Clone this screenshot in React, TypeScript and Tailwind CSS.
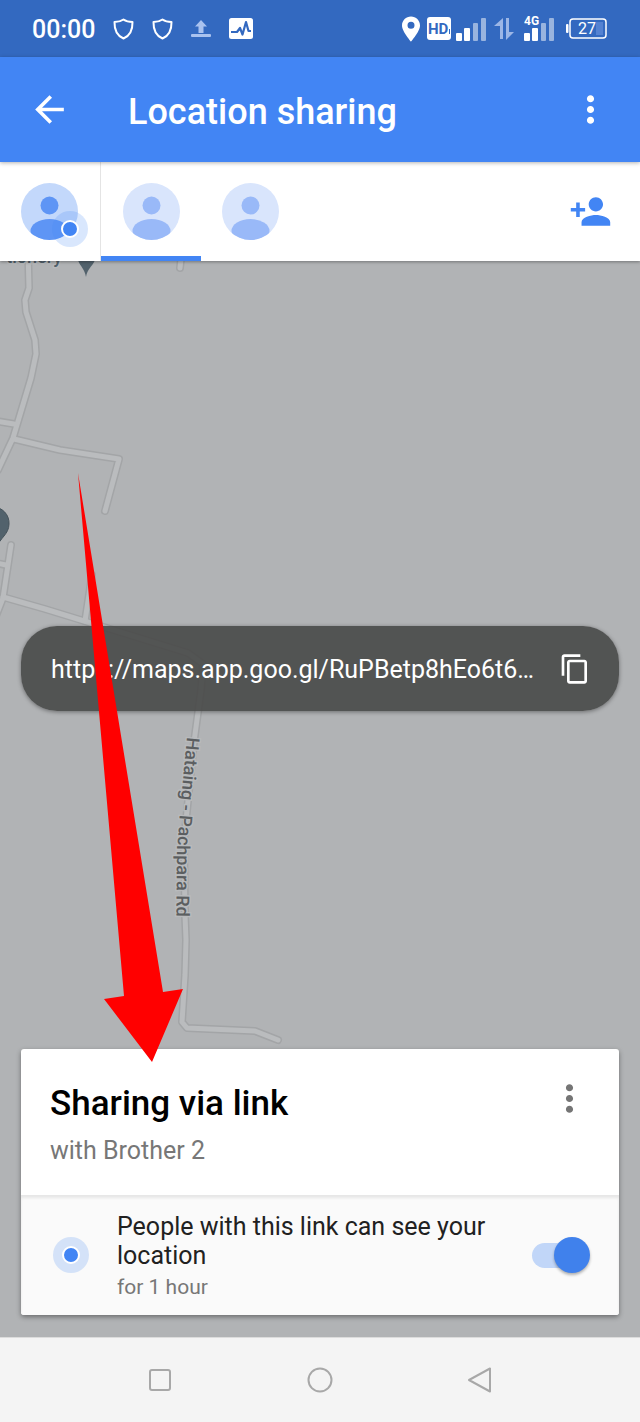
import React, {useState} from "react";
import {MdArrowBack, MdContentCopy, MdMoreVert, MdPersonAdd} from "react-icons/md";

const SHARE_LINK = "https://maps.app.goo.gl/RuPBetp8hEo6t6…";

const roads = [
    "M28 250 L29 288 L25 300 L26 312 L35 340 L36 354 L31 378 L13 438 L-2 470",
    "M-4 421 L14 424",
    "M14 439 L60 450 L119 459 L105 511",
    "M182 250 L180 268",
    "M11 545 L3 598 L-4 616",
    "M-4 563 L6 565",
    "M3 597 L45 609 L120 632 L188 653 L203 664 L201 690 L194 742 L184 840 L185 915 L186 940 L185 975 L182 1022 L187 1028 L255 1031 L278 1040",
    "M92 575 L85 621",
];

const ShieldIcon: React.FC = () => (
    <svg className="w-[21px] h-[22px]" viewBox="0 0 21 22" fill="none" stroke="currentColor" strokeWidth="2"
         strokeLinejoin="round">
        <path d="M10.5 1.5 C8 3.3 4.8 4 1.5 4 C1.3 12 3.5 17.5 10.5 20.5 C17.5 17.5 19.7 12 19.5 4 C16.2 4 13 3.3 10.5 1.5 Z"/>
    </svg>
);

const SignalBars: React.FC<{ label?: string }> = ({label}) => (
    <svg className="w-[31px] h-[28px]" viewBox="0 0 31 28" fill="currentColor">
        <rect x="0" y="18" width="6" height="8" rx="1"/>
        <rect x="8" y="13" width="6" height="13" rx="1"/>
        <g opacity="0.5">
            <rect x="17" y="8" width="5" height="18" rx="1"/>
            <rect x="25" y="3" width="5" height="23" rx="1"/>
        </g>
        {label && (
            <text x="0" y="10" fontSize="12" fontWeight="700" fontFamily="Roboto, sans-serif">{label}</text>
        )}
    </svg>
);

const StatusBar: React.FC = () => (
    <div className="flex items-center justify-between h-[57px] pl-8 pr-[33px] bg-[#3369c0] text-white">
        <div className="flex items-center gap-[18px]">
            <span className="pt-[2px] text-[25px] leading-8 font-medium">00:00</span>
            <ShieldIcon/>
            <ShieldIcon/>
            <svg className="w-5 h-[18px] text-[#a9c2ef]" viewBox="0 0 20 18" fill="currentColor">
                <path d="M10 0 L16 6.5 H12.5 V13 H7.5 V6.5 H4 Z"/>
                <rect x="0" y="14" width="20" height="3" rx="1"/>
            </svg>
            <svg className="w-6 h-[21px]" viewBox="0 0 24 21">
                <rect width="24" height="21" rx="2.5" fill="#fff"/>
                <path d="M2 14 H8 L11 10 L13.5 16.5 L17 4 L19.500 13 H22" fill="none" stroke="#3369c0"
                      strokeWidth="2.2" strokeLinejoin="round"/>
            </svg>
        </div>
        <div className="flex items-center">
            <svg className="w-[18px] h-[26px]" viewBox="0 0 18 26" fill="#fff">
                <path fillRule="evenodd"
                      d="M9 0.5 C4 0.5 0 4.4 0 9.4 C0 15.5 9 25.5 9 25.5 C9 25.5 18 15.5 18 9.4 C18 4.4 14 0.5 9 0.5 Z M9 5.8 A3.5 3.5 0 1 1 9 12.8 A3.5 3.5 0 1 1 9 5.8 Z"/>
            </svg>
            <svg className="w-6 h-[23px] ml-[7px]" viewBox="0 0 24 23">
                <rect width="24" height="23" rx="3" fill="#fff"/>
                <text x="1" y="17" fontSize="15" fontWeight="700" fontFamily="Roboto, sans-serif" fill="#3369c0">HD</text>
                <path d="M22.5 12 V17" stroke="#3369c0" strokeWidth="1"/>
            </svg>
            <div className="ml-[5px]"><SignalBars/></div>
            <svg className="w-5 h-[22px] ml-[7px] text-[#9cb6e6]" viewBox="0 0 20 22" fill="currentColor">
                <path d="M9 0 V21 H6 V8 H0 Z"/>
                <path d="M12 0 H15 V14 H20 L12 22 Z"/>
            </svg>
            <div className="ml-[10px]"><SignalBars label="4G"/></div>
            <svg className="w-[41px] h-[21px] ml-[11px]" viewBox="0 0 41 21">
                <rect x="0" y="6" width="2.5" height="9" rx="1" fill="#fff"/>
                <rect x="4" y="1" width="36" height="19" rx="3" fill="none" stroke="#fff" strokeWidth="1.500"/>
                <rect x="30" y="4" width="7" height="13" fill="#5482d2"/>
                <text x="12" y="16" fontSize="16" fontFamily="Roboto, sans-serif" fill="#fff">27</text>
            </svg>
        </div>
    </div>
);

const Avatar: React.FC<{ faded?: boolean }> = ({faded}) => (
    <svg className="size-[57px]" viewBox="0 0 57 57">
        <defs>
            <clipPath id="avatar-clip">
                <circle cx="28.5" cy="28.5" r="28.5"/>
            </clipPath>
        </defs>
        <g clipPath="url(#avatar-clip)" fill={faded ? "#99b9f8" : "#5e95f5"}>
            <rect width="57" height="57" fill={faded ? "#d9e5fc" : "#c3d8fb"}/>
            <circle cx="28.5" cy="22.5" r="9"/>
            <ellipse cx="28.5" cy="48" rx="19" ry="12"/>
        </g>
    </svg>
);

const PeopleBar: React.FC = () => (
    <div className="relative z-10 flex items-stretch h-[99px] bg-white shadow-[0_1px_3px_rgba(0,0,0,0.35)]">
        <button type="button" aria-label="You"
                className="flex items-center justify-center w-[101px] pr-px border-r border-[#e4e4e4]">
            <span className="relative">
                <Avatar/>
                <span className="absolute -right-[10px] -bottom-[7px] flex items-center justify-center size-9 rounded-full bg-[#4285f4]/20">
                    <span className="size-[18px] rounded-full border-2 border-white bg-[#4285f4]"></span>
                </span>
            </span>
        </button>
        <button type="button" aria-label="Brother 2"
                className="flex items-center justify-center w-[100px] pt-[5px] border-b-5 border-[#4285f4]">
            <Avatar faded/>
        </button>
        <button type="button" aria-label="Shared contact" className="flex items-center justify-center w-[99px]">
            <Avatar faded/>
        </button>
        <button type="button" aria-label="Add people" className="ml-auto mr-7 text-[#4285f4]">
            <MdPersonAdd className="size-[43px]"/>
        </button>
    </div>
);

const MapCanvas: React.FC = () => (
    <svg className="absolute inset-0 w-full h-full" viewBox="0 261 640 1076" preserveAspectRatio="xMinYMin slice">
        <g fill="none" strokeLinecap="round" strokeLinejoin="round">
            {roads.map((d) => <path key={d} d={d} stroke="#a3a5a7" strokeWidth="8"/>)}
            {roads.map((d) => <path key={d} d={d} stroke="#babcbe" strokeWidth="5"/>)}
        </g>
        {/* Place pins */}
        <path d="M77 255 H96 C95 266 88 266 86 277 C84 266 78 266 77 255 Z" fill="#52626c"/>
        <path d="M-7 507 A16 16 0 0 1 9 524 C9 534 0 538 -4 548 H-7 Z" fill="#52626c" stroke="#46535b"/>
        <g fontFamily="Roboto, sans-serif" fontWeight="500" stroke="#b8babc" strokeWidth="3" paintOrder="stroke">
            <text x="62" y="263" fontSize="18" textAnchor="end" fill="#52626c">tionery</text>
            <path id="road-label" d="M187 737 L181 800 L177 850 L176 940" fill="none" stroke="none"/>
            <text fontSize="18" fill="#5b5e60">
                <textPath href="#road-label">Hataing - Pachpara Rd</textPath>
            </text>
        </g>
    </svg>
);

const LinkPill: React.FC = () => (
    <div className="relative flex items-center justify-between gap-4 h-[85px] pl-[30px] pr-7 rounded-[36px] bg-[#484948]/90 text-white shadow-[0_1px_4px_rgba(0,0,0,0.4)]">
        <a href="https://maps.app.goo.gl/" className="pt-[3px] truncate text-[25px] leading-8">{SHARE_LINK}</a>
        <button type="button" aria-label="Copy link" className="shrink-0">
            <MdContentCopy className="size-8"/>
        </button>
    </div>
);

const SharingCard: React.FC = () => {
    const [enabled, setEnabled] = useState(true);

    return (
        <div className="relative rounded-[3px] bg-white shadow-[0_2px_5px_rgba(0,0,0,0.4)]">
            {/* Header */}
            <div className="flex items-start justify-between h-[146px] pt-7 pl-[29px] pr-7">
                <div>
                    <h2 className="pt-[2px] text-[35px] leading-[50px] font-medium text-black">Sharing via link</h2>
                    <p className="mt-1 text-[25px] leading-9 text-[#777]">with Brother 2</p>
                </div>
                <button type="button" aria-label="Sharing options" className="text-[#757575]">
                    <MdMoreVert className="size-[43px]"/>
                </button>
            </div>
            {/* Details */}
            <div className="flex items-center h-[120px] pl-8 pr-[37px] rounded-b-[3px] bg-[#fafafa] shadow-[inset_0_3px_3px_rgba(0,0,0,0.08)]">
                <span className="flex shrink-0 items-center justify-center size-9 rounded-full bg-[#d4e2f8]">
                    <span className="size-[18px] rounded-full border-2 border-white bg-[#4285f4]"></span>
                </span>
                <label htmlFor="link-sharing" className="flex-1 pt-[5px] ml-7 mr-10">
                    <span className="block text-[25px] leading-[29px] text-[#212121]">
                        People with this link can see your location
                    </span>
                    <span className="block pt-px text-[21px] leading-8 text-[#777]">for 1 hour</span>
                </label>
                <input
                    id="link-sharing"
                    type="checkbox"
                    role="switch"
                    checked={enabled}
                    onChange={(e) => setEnabled(e.target.checked)}
                    className="relative shrink-0 appearance-none w-[50px] h-[25px] rounded-full bg-gray-300 checked:bg-[#c1d6f8] before:absolute before:-top-[6px] before:left-0 checked:before:left-[22px] before:size-9 before:rounded-full before:bg-white checked:before:bg-[#4081ec] before:shadow-[0_2px_3px_rgba(0,0,0,0.3)]"
                />
            </div>
        </div>
    );
};

const App: React.FC = () => {
    return (
        <div className="flex flex-col min-h-screen font-[Roboto,sans-serif] bg-[#b1b3b5]">
            <StatusBar/>
            <header className="relative z-20 flex items-center h-[105px] px-7 bg-[#4285f4] text-white shadow-[0_1px_4px_rgba(0,0,0,0.3)]">
                <button type="button" aria-label="Back">
                    <MdArrowBack className="size-[43px]"/>
                </button>
                <h1 className="flex-1 ml-[57px] pt-1 text-[36px] leading-[48px] font-medium">Location sharing</h1>
                <button type="button" aria-label="More options">
                    <MdMoreVert className="size-[43px]"/>
                </button>
            </header>
            <PeopleBar/>
            <main className="relative flex flex-1 flex-col justify-between px-[21px] pt-[365px] pb-[22px]">
                <MapCanvas/>
                <LinkPill/>
                <SharingCard/>
                <svg className="absolute inset-0 w-full h-full pointer-events-none" viewBox="0 261 640 1076"
                     preserveAspectRatio="xMinYMin slice">
                    <path d="M78 473 L124 996 L104 999 L152 1062 L183 989 L163 992 Z" fill="#f00"/>
                </svg>
            </main>
            <nav className="relative flex items-center h-[85px] px-20 bg-[#f4f4f4] text-[#a8a8a8] border-t border-[#dcdcdc]">
                <button type="button" aria-label="Recent apps" className="flex flex-1 justify-center">
                    <svg className="size-[26px]" viewBox="0 0 26 26" fill="none" stroke="currentColor" strokeWidth="2">
                        <rect x="3" y="3" width="20" height="20" rx="2"/>
                    </svg>
                </button>
                <button type="button" aria-label="Home" className="flex flex-1 justify-center">
                    <svg className="size-[26px]" viewBox="0 0 26 26" fill="none" stroke="currentColor" strokeWidth="2">
                        <circle cx="13" cy="13" r="11.5"/>
                    </svg>
                </button>
                <button type="button" aria-label="Back to previous" className="flex flex-1 justify-center">
                    <svg className="size-[26px]" viewBox="0 0 26 26" fill="none" stroke="currentColor" strokeWidth="2"
                         strokeLinejoin="round">
                        <path d="M2 13 L23 1.5 V24.5 Z"/>
                    </svg>
                </button>
            </nav>
        </div>
    );
};

export default App;
